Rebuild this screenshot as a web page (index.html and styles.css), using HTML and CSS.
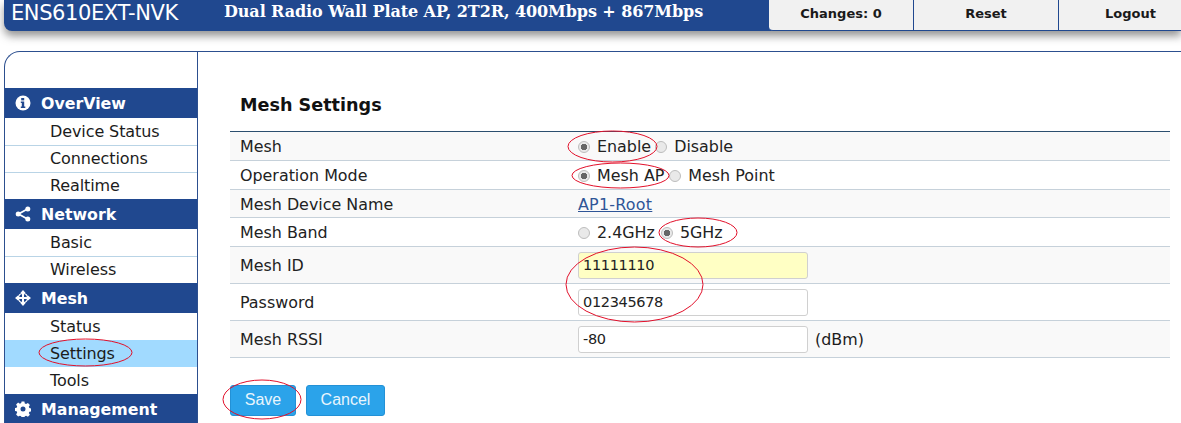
FILE: index.html
```html
<!DOCTYPE html>
<html lang="en">
<head>
<meta charset="utf-8">
<title>Mesh Settings</title>
<link rel="stylesheet" href="styles.css">
</head>
<body>
<div class="page">
  <header class="topbar">
    <div class="model">ENS610EXT-NVK</div>
    <div class="tagline">Dual Radio Wall Plate AP, 2T2R, 400Mbps + 867Mbps</div>
    <nav class="topnav">
      <a class="topbtn tb1">Changes: 0</a>
      <a class="topbtn tb2">Reset</a>
      <a class="topbtn tb3">Logout</a>
    </nav>
  </header>
  <div class="panel">
    <aside class="sidebar">
      <div class="group"><svg class="gicon" viewBox="0 0 16 16"><circle cx="8" cy="8" r="7.5" fill="#fff"/><rect x="6.2" y="3" width="3" height="2.4" fill="#20488f"/><path d="M5.8 6.6h3.4v5h1.1v1.3H5.8v-1.3h1v-3.7h-1z" fill="#20488f"/></svg>OverView</div>
      <a class="item">Device Status</a>
      <a class="item sep">Connections</a>
      <a class="item sep">Realtime</a>
      <div class="group"><svg class="gicon" viewBox="0 0 16 16"><path d="M12.5 3 3.5 8l9 5" fill="none" stroke="#fff" stroke-width="1.8"/><circle cx="12.8" cy="3" r="2.5" fill="#fff"/><circle cx="3.2" cy="8" r="2.5" fill="#fff"/><circle cx="12.8" cy="13" r="2.5" fill="#fff"/></svg>Network</div>
      <a class="item">Basic</a>
      <a class="item sep">Wireless</a>
      <div class="group"><svg class="gicon" viewBox="0 0 16 16"><path d="M8 0 10.6 3H9v4h4V5.4L16 8l-3 2.600V9H9v4h1.600L8 16l-2.600-3H7V9H3v1.600L0 8l3-2.600V7h4V3H5.400z" fill="#fff"/><circle cx="8" cy="8" r="4.6" fill="none" stroke="#fff" stroke-width="1.4"/></svg>Mesh</div>
      <a class="item">Status</a>
      <a class="item active">Settings</a>
      <a class="item">Tools</a>
      <div class="group"><svg class="gicon" viewBox="0 0 16 16"><path fill="#fff" fill-rule="evenodd" d="M6.6.5h2.8l.4 2 1.3.6 1.8-1.1 2 2-1.1 1.8.6 1.3 2 .4v2.8l-2 .4-.6 1.3 1.1 1.8-2 2-1.8-1.1-1.3.6-.4 2H6.6l-.4-2-1.3-.6L3.100 15.400l-2-2L2.200 11.600l-.6-1.300-2-.4V7.100l2-.4.6-1.300L1.100 3.600l2-2 1.800 1.100 1.300-.6zM8 5.500a2.500 2.500 0 1 0 0 5 2.500 2.500 0 0 0 0-5z"/></svg>Management</div>
    </aside>
    <main class="content">
      <h1 class="title">Mesh Settings</h1>
      <div class="table">
        <div class="row odd"><div class="label">Mesh</div><div class="value"><label class="opt"><input class="radio" type="radio" name="m" checked>Enable</label><label class="opt"><input class="radio" type="radio" name="m">Disable</label></div></div>
        <div class="row"><div class="label">Operation Mode</div><div class="value"><label class="opt wide"><input class="radio" type="radio" name="o" checked>Mesh AP</label><label class="opt"><input class="radio" type="radio" name="o">Mesh Point</label></div></div>
        <div class="row odd short"><div class="label">Mesh Device Name</div><div class="value"><a class="link">AP1-Root</a></div></div>
        <div class="row"><div class="label">Mesh Band</div><div class="value"><label class="opt wider"><input class="radio" type="radio" name="b">2.4GHz</label><label class="opt"><input class="radio" type="radio" name="b" checked>5GHz</label></div></div>
        <div class="row tall odd"><div class="label">Mesh ID</div><div class="value"><input class="field yellow" type="text" value="11111110"></div></div>
        <div class="row tall"><div class="label">Password</div><div class="value"><input class="field" type="text" value="012345678"></div></div>
        <div class="row tall odd"><div class="label">Mesh RSSI</div><div class="value"><input class="field" type="text" value="-80"><span class="unit">(dBm)</span></div></div>
      </div>
      <div class="actions">
        <button class="btn save" type="button">Save</button>
        <button class="btn" type="button">Cancel</button>
      </div>
    </main>
  </div>
  <svg class="marks" viewBox="0 0 1181 423" aria-hidden="true">
    <ellipse cx="612.500" cy="146.500" rx="44.500" ry="15.500"/>
    <ellipse cx="620.500" cy="175.500" rx="48.500" ry="12.500"/>
    <ellipse cx="698" cy="232.500" rx="39" ry="14.500"/>
    <ellipse cx="634.500" cy="284.500" rx="68.500" ry="37.500"/>
    <ellipse cx="85.500" cy="352.500" rx="46.500" ry="13.500"/>
    <ellipse cx="262" cy="399.500" rx="39" ry="19.500"/>
  </svg>
</div>
</body>
</html>
```
FILE: styles.css
```css
* { box-sizing: border-box; }
html, body { margin: 0; padding: 0; background: #fff; }
body { font-family: "DejaVu Sans", Verdana, sans-serif; color: #1c1c1c; font-size: 15px; }
.page { position: relative; width: 1181px; height: 423px; overflow: hidden; }

.topbar {
  display: flex; align-items: flex-start; height: 31px; margin-left: 4px;
  background: #20488f; border-bottom-left-radius: 8px;
  box-shadow: 0 5px 9px rgba(60, 60, 60, .55);
  color: #fff;
}
.model { width: 220px; padding-left: 7px; font-size: 21px; line-height: 26px; letter-spacing: -.4px; }
.tagline { flex: 1; font-family: "DejaVu Serif", serif; font-weight: 700; font-size: 16px; line-height: 23px; letter-spacing: -.08px; }
.topnav { display: flex; height: 31px; }
.topbtn {
  display: flex; align-items: center; justify-content: center;
  height: 31px; background: #f1f1f1; color: #1a1a1a;
  font-weight: 700; font-size: 13px; padding-bottom: 4px;
  border-bottom: 1px solid #20488f; border-right: 1px solid #20488f;
}
.tb1 { width: 145px; border-bottom-left-radius: 4px; }
.tb2 { width: 145px; }
.tb3 { width: 122px; border-right: 0; padding-left: 21px; }

.panel {
  display: flex; height: 400px; margin: 20px 0 0 4px;
  border-top: 1px solid #2c4f8f; border-left: 1px solid #2c4f8f; border-top-left-radius: 16px;
}
.sidebar { width: 193px; flex: none; padding-top: 36px; border-right: 1px solid #2c4f8f; }
.group {
  display: flex; align-items: center; height: 30px; background: #20488f; color: #fff;
  font-weight: 700; font-size: 15.800px; padding-left: 10px;
}
.gicon { width: 16px; height: 16px; margin-right: 10px; flex: none; }
.item { display: flex; align-items: center; height: 27px; padding-left: 45px; font-size: 16px; letter-spacing: -.1px; color: #1c1c1c; }
.sep { border-top: 1px solid #b9d4e6; padding-bottom: 1px; }
.active { background: #a1daff; }

.content { flex: 1; min-width: 0; padding: 0 11px 0 32px; }
.title { margin: 42px 0 15px 10px; font-size: 17.600px; line-height: 22px; font-weight: 700; color: #111; }
.table { border-top: 1px solid #2c4f6f; border-bottom: 1px solid #c6d1da; }
.row { display: flex; align-items: center; height: 29px; padding-top: 1px; border-top: 1px solid #c6d1da; padding-left: 10px; font-size: 15.900px; }
.row:first-child { border-top: 0; height: 28px; }
.row.short { height: 28px; }
.row.tall { height: 37px; padding-top: 0; }
.odd { background: #f9f9f9; }
.label { width: 338px; flex: none; color: #222; }
.value { display: flex; align-items: center; }
.opt { display: flex; align-items: center; margin-right: 4px; color: #222; }
.wide { margin-right: 5px; }
.wider { margin-right: 6px; }
.radio {
  appearance: none; width: 12px; height: 12px; margin: 0 7px 0 0; border-radius: 50%;
  border: 1px solid #bdbdbd; background: #e9e9e9;
}
.radio:checked { background: radial-gradient(circle, #666 0 3px, #e9e9e9 3.500px); }
.link { color: #2f5597; text-decoration: underline; letter-spacing: .25px; }
.field {
  width: 230px; height: 27px; padding: 0 4px; border: 1px solid #d0d0d0; border-radius: 3px;
  font-family: "DejaVu Sans", sans-serif; font-size: 14.500px; color: #222; background: #fff; letter-spacing: -.35px;
}
.yellow { background: #ffffc4; }
.unit { margin-left: 7px; }
.actions { display: flex; gap: 10px; margin-top: 27px; }
.btn {
  width: 79px; height: 31px; background: #2ba3ea; color: #e9f5fd; border: 1px solid #2391d6; border-radius: 3px;
  font-family: "Liberation Sans", sans-serif; font-size: 16px; padding: 0 0 2px;
}
.save { width: 66px; }

.marks { position: absolute; left: 0; top: 0; width: 1181px; height: 423px; pointer-events: none; }
.marks ellipse { fill: none; stroke: #e2102a; stroke-width: 1; }
```
